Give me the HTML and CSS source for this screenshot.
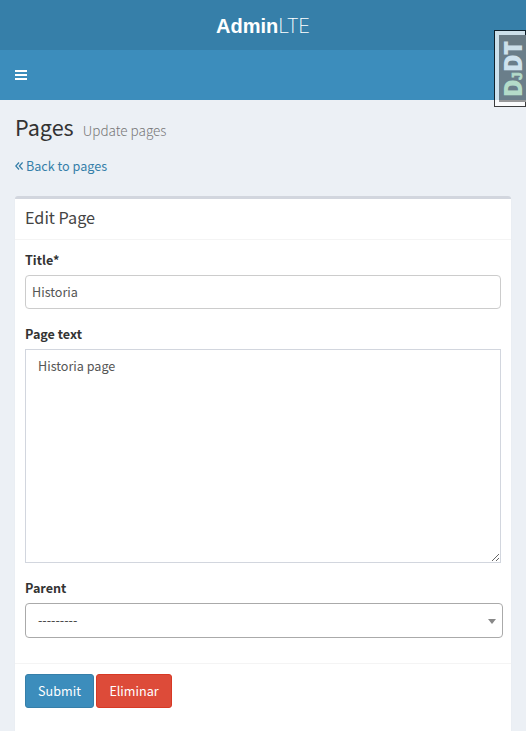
FILE: index.html
```
<!DOCTYPE html>
<html lang="en">
<head>
<meta charset="utf-8">
<title>AdminLTE</title>
<link rel="stylesheet" href="styles.css">
</head>
<body>
<header>
  <a class="logo"><b>Admin</b><span class="lte">LTE</span></a>
  <nav class="navbar">
    <svg class="bars" width="12" height="10" viewBox="0 0 12 10"><path fill="#fff" d="M0 0h12v2H0zM0 4h12v2H0zM0 8h12v2H0z"/></svg>
  </nav>
</header>
<main>
  <h1><span class="name">Pages</span><small>Update pages</small></h1>
  <a class="back"><svg width="8" height="8" viewBox="0 0 8 8" fill="none" stroke="currentColor" stroke-width="1.3"><path d="M4 .5.8 4 4 7.5M7.6.5 4.4 4l3.2 3.5"/></svg><span class="back-text">Back to pages</span></a>
  <form class="box">
    <div class="box-header"><h3>Edit Page</h3></div>
    <div class="box-body">
      <label class="title-label">Title*</label>
      <input class="field" type="text" value="Historia">
      <label class="text-label">Page text</label>
      <textarea class="area">Historia page</textarea>
      <label class="parent-label">Parent</label>
      <div class="select"><span class="choice">---------</span><i class="arrow"></i></div>
    </div>
    <div class="box-footer">
      <button type="button" class="btn submit">Submit</button>
      <button type="button" class="btn delete">Eliminar</button>
    </div>
  </form>
</main>
<div class="djdt"><div class="djdt-inner"><span class="dj">D<span class="j">J</span></span><span class="dt">DT</span></div></div>
</body>
</html>
```
FILE: styles.css
```
* { box-sizing: border-box; }
body {
  margin: 0;
  height: 731px;
  overflow: hidden;
  background: #ecf0f5;
  color: #333;
  font: 12.6px/20px "Noto Sans CJK SC", sans-serif;
}
.logo {
  display: flex;
  justify-content: center;
  height: 50px;
  padding-right: 1px;
  background: #367fa9;
  color: #fff;
  font: 20px/52px "Liberation Sans", sans-serif;
}
.lte { font-family: Inter, sans-serif; font-weight: 200; letter-spacing: -1px; }
.navbar {
  display: flex;
  align-items: center;
  height: 50px;
  padding-left: 15px;
  background: #3c8dbc;
}
main { padding: 14px 15px 0; }
h1 {
  display: flex;
  align-items: baseline;
  gap: 9px;
  height: 26px;
  margin: 0;
  font-size: 21.6px;
  line-height: 26px;
  font-weight: 400;
}
h1 small { color: #777; font-size: 13.5px; font-weight: 300; }
.back {
  display: flex;
  align-items: center;
  gap: 3px;
  height: 20px;
  margin-top: 16px;
  color: #367fa9;
}
.box {
  height: 560px;
  margin-top: 20px;
  border-top: 3px solid #d2d6de;
  border-radius: 3px;
  background: #fff;
  box-shadow: 0 1px 1px rgba(0, 0, 0, .1);
}
.box-header {
  height: 41px;
  padding: 9px 10px;
  border-bottom: 1px solid #f4f4f4;
}
h3 {
  margin: 0;
  color: #444;
  font-size: 16.2px;
  line-height: 18px;
  font-weight: 400;
}
.box-body {
  display: flex;
  flex-direction: column;
  align-items: flex-start;
  height: 423px;
  padding: 10px;
}
label { height: 20px; margin-bottom: 5px; font-weight: 700; }
.field {
  width: 476px;
  height: 34px;
  margin-bottom: 15px;
  padding: 0 6px 2px;
  border: 1px solid #ccc;
  border-radius: 4px;
  color: #555;
  font: inherit;
}
.area {
  width: 476px;
  height: 214px;
  margin-bottom: 15px;
  padding: 6px 12px;
  border: 1px solid #d2d6de;
  color: #555;
  font: inherit;
}
.select {
  display: flex;
  justify-content: space-between;
  align-items: center;
  width: 478px;
  height: 35px;
  padding: 0 6px 0 12px;
  border: 1px solid #aaa;
  border-radius: 4px;
  color: #444;
}
.choice { padding-bottom: 2px; }
.arrow {
  margin-top: 1px;
  border: 4px solid transparent;
  border-top: 5px solid #888;
  border-bottom: 0;
}
.box-footer {
  display: flex;
  gap: 2px;
  padding: 10px;
  border-top: 1px solid #f4f4f4;
}
.btn {
  height: 34px;
  padding: 0;
  border: 1px solid #367fa9;
  border-radius: 3px;
  background: #3c8dbc;
  color: #fff;
  font: inherit;
}
.submit { width: 69px; }
.delete { width: 76px; background: #dd4b39; border-color: #d73925; }
.djdt {
  position: absolute;
  top: 30px;
  right: 0;
  width: 32px;
  height: 77px;
  padding: 4px 0 4px 4px;
  border: 1px solid #000;
  background: #fff;
  opacity: .75;
}
.djdt-inner {
  display: flex;
  align-items: flex-start;
  justify-content: flex-start;
  width: 27px;
  height: 67px;
  padding: 5px 2px 0 0;
  background: #7a7a7a;
  color: #fff;
  font: 800 24px/24px "Open Sans", sans-serif;
  letter-spacing: -.6px;
  writing-mode: vertical-rl;
  text-orientation: sideways;
  transform: rotate(180deg);
}
.dj { color: #dcf5ce; }
.dt { margin-top: 1px; }
.j { font: 700 14px/14px "Liberation Sans", sans-serif; -webkit-text-stroke: .6px currentColor; }
```
